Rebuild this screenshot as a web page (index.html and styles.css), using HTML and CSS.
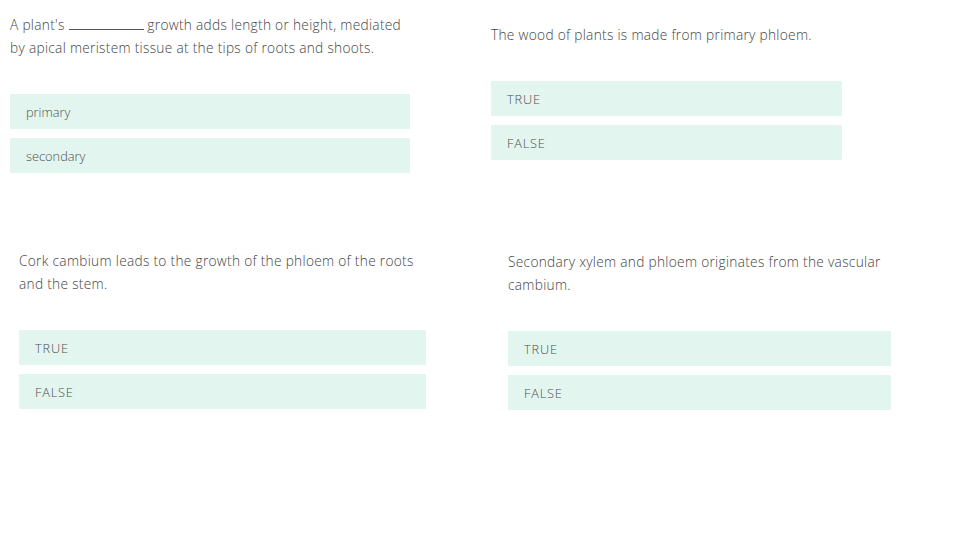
FILE: index.html
```html
<!DOCTYPE html>
<html>
<head>
<meta charset="utf-8">
<link rel="stylesheet" href="styles.css">
</head>
<body>
<main class="canvas">
  <section class="quiz q1">
    <p class="question">A plant's <span class="blank"></span> growth adds length or height, mediated<br>by apical meristem tissue at the tips of roots and shoots.</p>
    <div class="options">
      <div class="option">primary</div>
      <div class="option">secondary</div>
    </div>
  </section>
  <section class="quiz q2">
    <p class="question">The wood of plants is made from primary phloem.</p>
    <div class="options">
      <div class="option caps">TRUE</div>
      <div class="option caps">FALSE</div>
    </div>
  </section>
  <section class="quiz q3">
    <p class="question">Cork cambium leads to the growth of the phloem of the roots<br>and the stem.</p>
    <div class="options">
      <div class="option caps">TRUE</div>
      <div class="option caps">FALSE</div>
    </div>
  </section>
  <section class="quiz q4">
    <p class="question">Secondary xylem and phloem originates from the vascular<br>cambium.</p>
    <div class="options">
      <div class="option caps">TRUE</div>
      <div class="option caps">FALSE</div>
    </div>
  </section>
</main>
</body>
</html>
```
FILE: styles.css
```css
html, body {
  margin: 0;
  padding: 0;
  background: #ffffff;
}
body {
  font-family: "Open Sans", Lato, sans-serif;
  font-weight: 300;
  color: #444444;
  width: 960px;
  height: 540px;
  overflow: hidden;
}
.canvas {
  display: grid;
  grid-template-columns: 480px 480px;
  grid-template-rows: 236px 304px;
}
.quiz {
  display: flex;
  flex-direction: column;
}
.question {
  margin: 0;
  font-size: 13.7px;
  line-height: 23px;
  letter-spacing: 0.3px;
  white-space: nowrap;
}
.blank {
  display: inline-block;
  width: 75px;
  border-bottom: 1px solid #555;
  vertical-align: baseline;
}
.options {
  display: flex;
  flex-direction: column;
  gap: 9px;
  margin-top: 35px;
}
.option {
  height: 35px;
  display: flex;
  align-items: center;
  padding-left: 16px;
  background: #e3f5ef;
  font-size: 12.8px;
  color: #505050;
  border-radius: 1px;
}
.caps {
  letter-spacing: 0.8px;
}
.q1 { padding: 13px 0 0 10px; }
.q1 .options { width: 400px; }
.q2 { padding: 23px 0 0 11px; }
.q2 .options { width: 351px; }
.q3 { padding: 13px 0 0 19px; }
.q3 .options { width: 407px; }
.q4 { padding: 14px 0 0 28px; }
.q4 .options { width: 383px; }
```
